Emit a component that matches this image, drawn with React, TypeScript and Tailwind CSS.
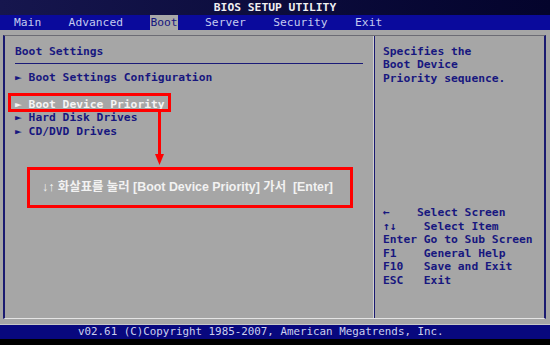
const menu = ["Main", "Advanced", "Boot", "Server", "Security", "Exit"];

const keys: [string, string][] = [
  ["←    ", "Select Screen"],
  ["↑↓    ", "Select Item"],
  ["Enter ", "Go to Sub Screen"],
  ["F1    ", "General Help"],
  ["F10   ", "Save and Exit"],
  ["ESC   ", "Exit"],
];

const items = ["Hard Disk Drives", "CD/DVD Drives"];

export default function App() {
  return (
    <div className="relative w-[550px] h-[345px] overflow-hidden bg-black font-['DejaVu_Sans_Mono','Liberation_Mono',monospace] text-[11.3px] leading-[13.5px] font-bold">
      {/* title */}
      <div className="h-[15px] flex items-center justify-center bg-gradient-to-r from-[#16164e] to-[#04042c] text-[#f0f0f0]">
        BIOS SETUP UTILITY
      </div>

      {/* menu */}
      <div className="h-[15px] flex items-stretch gap-[27.4px] pl-[14px] bg-[#0a0a9c] text-[#c4cbef] font-normal">
        {menu.map((m) => (
          <span
            key={m}
            className={
              m === "Boot"
                ? "flex items-center bg-[#a8a8a8] text-[#14147e]"
                : "flex items-center"
            }
          >
            {m}
          </span>
        ))}
      </div>

      {/* body */}
      <div className="h-[295px] bg-[#a6a6a6] pt-[5px] pl-[3px] border-b border-[#c8c8c8]">
        <div className="w-[543px] h-[284px] flex border-l-2 border-r-2 border-[#1a1a70] border-t border-t-[#6c6c74] border-b border-b-[#e4e4e4] text-[#17177f]">
          <div className="w-[368px] pt-[8.5px]">
            <div className="pl-[10px]">Boot Settings</div>
            <div className="mx-[10px] mt-[5px] h-px bg-[#1a1a78]" />
            <div className="pl-[10px] mt-[6.5px]">► Boot Settings Configuration</div>
            <div className="h-[13.5px]" />
            <div className="pl-[10px] text-[#f4f4f4]">► Boot Device Priority</div>
            {items.map((t) => (
              <div key={t} className="pl-[10px]">
                ► {t}
              </div>
            ))}
          </div>
          <div className="w-[2px] bg-[#1a1a70] border-l border-[#d0d0d0]" />
          <div className="flex-1 flex flex-col justify-between pl-[8px] pt-[8.5px] pb-[31px]">
            <div>
              <div>Specifies the</div>
              <div>Boot Device</div>
              <div>Priority sequence.</div>
            </div>
            <div>
              {keys.map(([k, d]) => (
                <div key={d} className="whitespace-pre">
                  {k}
                  {d}
                </div>
              ))}
            </div>
          </div>
        </div>
      </div>

      {/* footer */}
      <div className="h-[14px] bg-[#08087e] text-[#ccd0ee] font-normal text-[10.85px] pl-[78px] flex items-center">
        v02.61 (C)Copyright 1985-2007, American Megatrends, Inc.
      </div>

      {/* red annotations */}
      <div className="absolute left-[8px] top-[93px] w-[163px] h-[19px] border-[3px] border-[#ff0000]" />
      <div className="absolute left-[158px] top-[111px] w-[3px] h-[46px] bg-[#ff0000]" />
      <svg className="absolute left-[155px] top-[154px]" width="9" height="11" viewBox="0 0 9 11">
        <polygon points="0,0 9,0 4.5,11" fill="#ff0000" />
      </svg>
      <div className="absolute left-[27px] top-[167px] w-[326px] h-[41px] border-[3px] border-[#ff0000] flex items-center pl-[12px] font-['Liberation_Sans','Noto_Sans_CJK_KR',sans-serif] text-[12.4px] font-bold text-[#f2f2f2]">
        ↓↑ 화살표를 눌러 [Boot Device Priority] 가서&nbsp; [Enter]
      </div>
    </div>
  );
}
